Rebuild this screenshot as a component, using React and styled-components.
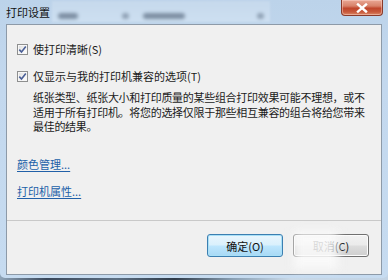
import React from "react";
import styled, { createGlobalStyle } from "styled-components";

const Global = createGlobalStyle`
  html, body { margin: 0; padding: 0; }
  body {
    width: 388px;
    height: 280px;
    overflow: hidden;
    background: linear-gradient(90deg, #8fa4b8 0%, #39475a 12%, #5c6f83 30%, #2e3a48 45%, #8aa0b4 60%, #c9d9e8 75%, #c2d3e4 100%);
    font-family: "Noto Sans CJK SC", "Noto Sans", sans-serif;
  }
`;

const Window = styled.div`
  width: 388px;
  height: 278px;
  box-sizing: border-box;
  background: linear-gradient(180deg, #bcd3ea 0%, #c3d8ee 30%, #c6dbf0 100%);
  border-radius: 0 0 5px 5px;
  display: flex;
  flex-direction: column;
`;

const TitleBar = styled.div`
  height: 24px;
  display: flex;
  align-items: flex-start;
  padding-left: 6px;
`;

const Title = styled.div`
  font-size: 11px;
  line-height: 11px;
  margin-top: 7px;
  color: #111;
`;

const GlassPanel = styled.div`
  margin-left: 2px;
  margin-top: 1px;
  width: 218px;
  height: 21px;
  background: linear-gradient(180deg, #c6d9ec 0%, #cddff1 100%);
  filter: blur(1px);
  display: flex;
  align-items: center;
`;

const Blob = styled.span`
  display: block;
  width: ${(p) => p.w}px;
  height: ${(p) => p.h || 6}px;
  margin-left: ${(p) => p.ml}px;
  margin-top: 8px;
  background: #74869a;
  border-radius: 3px;
  filter: blur(1.6px);
  opacity: ${(p) => p.o || 0.9};
`;

const CloseButton = styled.div`
  margin-left: auto;
  margin-right: 5px;
  width: 42px;
  height: 16px;
  box-sizing: border-box;
  border: 1px solid #8a3a2a;
  border-top: none;
  border-radius: 0 0 4px 4px;
  background: linear-gradient(180deg, #e9a795 0%, #d8826a 40%, #c0462c 55%, #c85a3c 80%, #dc8a68 100%);
  box-shadow: inset 0 0 0 1px rgba(255, 220, 210, 0.45);
  display: flex;
  align-items: center;
  justify-content: center;
`;

const Panel = styled.div`
  margin: 0 6px;
  height: 251px;
  box-sizing: border-box;
  border: 1px solid #8d9aa8;
  background: #f0f0f0;
  display: flex;
  flex-direction: column;
  position: relative;
`;

const Body = styled.div`
  height: 196px;
  border-bottom: 1px solid #c9c9c9;
  padding: 17px 0 0 10px;
  box-sizing: border-box;
  display: flex;
  flex-direction: column;
  color: #1b1b1b;
  font-size: 11px;
`;

const CheckRow = styled.label`
  display: flex;
  align-items: center;
  gap: 5px;
  height: 12px;
  line-height: 12px;
  margin-top: ${(p) => p.mt || 0}px;
`;

const Box = styled.span`
  width: 11px;
  height: 11px;
  box-sizing: border-box;
  border: 1px solid #8e8f8f;
  background: linear-gradient(135deg, #dcdcdc 0%, #f4f4f4 60%, #ffffff 100%);
  box-shadow: inset 0 0 0 1px #f7f7f7;
  display: flex;
  align-items: center;
  justify-content: center;
  flex: none;
`;

const Para = styled.p`
  margin: 8px 0 0 16px;
  font-size: 11px;
  line-height: 14.5px;
  letter-spacing: -0.3px;
  white-space: nowrap;
`;

const LinkText = styled.a`
  color: #2160a8;
  text-decoration: underline;
  text-underline-offset: 2px;
  font-size: 11px;
  line-height: 12px;
  display: block;
  margin-top: ${(p) => p.mt}px;
`;

const Footer = styled.div`
  flex: 1;
  display: flex;
  justify-content: flex-end;
  align-items: flex-start;
  padding: 13px 12px 0 0;
  gap: 10px;
`;

const Button = styled.button`
  width: 76px;
  height: 23px;
  box-sizing: border-box;
  border-radius: 3px;
  font-family: "Noto Sans CJK SC", "Noto Sans", sans-serif;
  font-size: 11px;
  color: #111;
  padding: 0;
  border: 1px solid ${(p) => (p.primary ? "#3c7fb1" : "#707070")};
  background: ${(p) =>
    p.primary
      ? "linear-gradient(180deg, #eaf6fd 0%, #d9f0fc 48%, #bee6fd 52%, #a7d9f5 100%)"
      : "linear-gradient(180deg, #f2f2f2 0%, #ebebeb 48%, #dddddd 52%, #cfcfcf 100%)"};
  box-shadow: inset 0 0 0 1px ${(p) => (p.primary ? "#a9e0f7" : "#fcfcfc")};
`;

const Watermark = styled.div`
  position: absolute;
  left: 287px;
  top: 206px;
  width: 44px;
  height: 38px;
  background: rgba(250, 250, 250, 0.85);
  filter: blur(4px);
  pointer-events: none;
`;

const Check = () => (
  <svg width="9" height="9" viewBox="0 0 9 9">
    <path d="M1.3 4.6 L3.5 7 L7.8 1.4" fill="none" stroke="#4a5f97" strokeWidth="1.6" />
  </svg>
);

export default function App() {
  return (
    <>
      <Global />
      <Window>
        <TitleBar>
          <Title>打印设置</Title>
          <GlassPanel>
            <Blob w={20} ml={6} />
            <Blob w={7} ml={44} o={0.7} />
            <Blob w={42} ml={14} />
            <Blob w={7} ml={72} o={0.7} />
          </GlassPanel>
          <CloseButton>
            <svg width="12" height="10" viewBox="0 0 12 10">
              <path d="M2 1.5 L10 8.5 M10 1.5 L2 8.5" stroke="#fff" strokeWidth="2.4" strokeLinecap="square" />
            </svg>
          </CloseButton>
        </TitleBar>
        <Panel>
          <Body>
            <CheckRow mt={1}>
              <Box><Check /></Box>
              使打印清晰(S)
            </CheckRow>
            <CheckRow mt={15}>
              <Box><Check /></Box>
              仅显示与我的打印机兼容的选项(T)
            </CheckRow>
            <Para>
              纸张类型、纸张大小和打印质量的某些组合打印效果可能不理想，或不
              <br />
              适用于所有打印机。将您的选择仅限于那些相互兼容的组合将给您带来
              <br />
              最佳的结果。
            </Para>
            <LinkText mt={24}>颜色管理...</LinkText>
            <LinkText mt={15}>打印机属性...</LinkText>
          </Body>
          <Footer>
            <Button primary>确定(O)</Button>
            <Button>取消(C)</Button>
          </Footer>
          <Watermark />
        </Panel>
      </Window>
    </>
  );
}
